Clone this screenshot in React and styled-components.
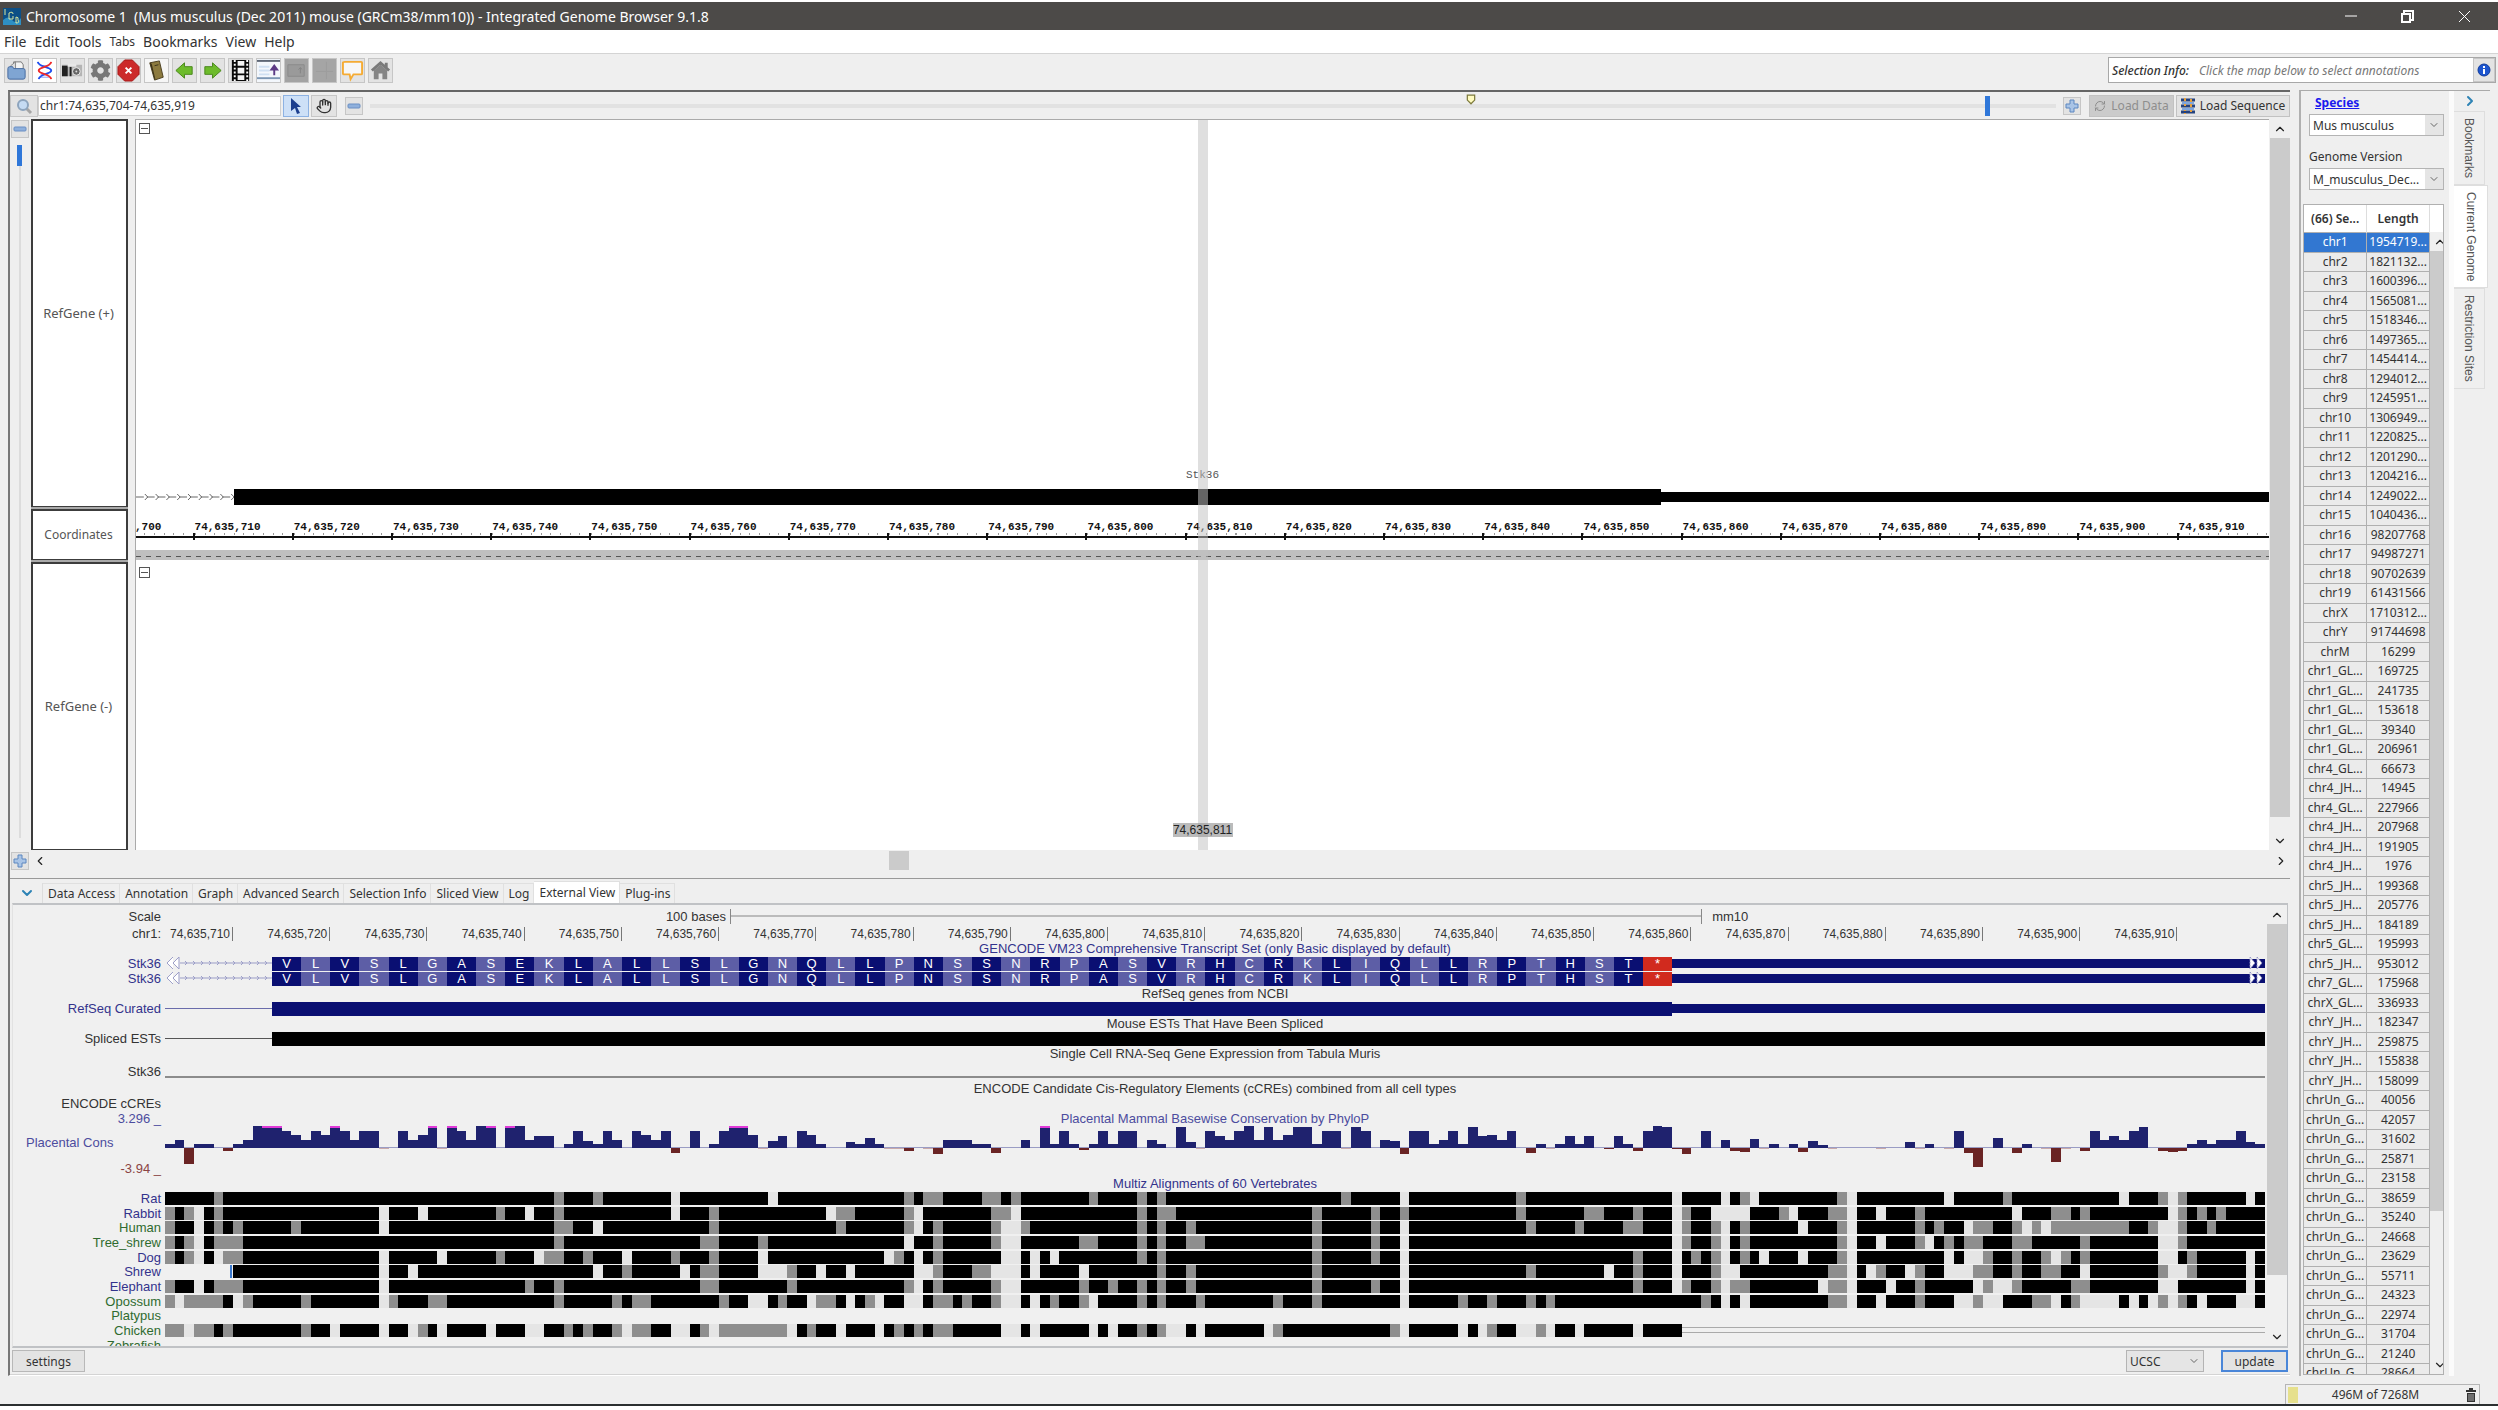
import { useState } from "react";
import styled, { createGlobalStyle, css } from "styled-components";
import { ChevronUp, ChevronDown, ChevronLeft, ChevronRight, Hand, RefreshCw } from "lucide-react";
import { FaCog } from "react-icons/fa";

const BASES = 216;

const menus = ["File", "Edit", "Tools", "Tabs", "Bookmarks", "View", "Help"];
const tabs = ["Data Access", "Annotation", "Graph", "Advanced Search", "Selection Info", "Sliced View", "Log", "External View", "Plug-ins"];
const sideTabs = ["Bookmarks", "Current Genome", "Restriction Sites"];

const sequences = [
  ["chr1", "1954719..."], ["chr2", "1821132..."], ["chr3", "1600396..."], ["chr4", "1565081..."],
  ["chr5", "1518346..."], ["chr6", "1497365..."], ["chr7", "1454414..."], ["chr8", "1294012..."],
  ["chr9", "1245951..."], ["chr10", "1306949..."], ["chr11", "1220825..."], ["chr12", "1201290..."],
  ["chr13", "1204216..."], ["chr14", "1249022..."], ["chr15", "1040436..."], ["chr16", "98207768"],
  ["chr17", "94987271"], ["chr18", "90702639"], ["chr19", "61431566"], ["chrX", "1710312..."],
  ["chrY", "91744698"], ["chrM", "16299"], ["chr1_GL...", "169725"], ["chr1_GL...", "241735"],
  ["chr1_GL...", "153618"], ["chr1_GL...", "39340"], ["chr1_GL...", "206961"], ["chr4_GL...", "66673"],
  ["chr4_JH...", "14945"], ["chr4_GL...", "227966"], ["chr4_JH...", "207968"], ["chr4_JH...", "191905"],
  ["chr4_JH...", "1976"], ["chr5_JH...", "199368"], ["chr5_JH...", "205776"], ["chr5_JH...", "184189"],
  ["chr5_GL...", "195993"], ["chr5_JH...", "953012"], ["chr7_GL...", "175968"], ["chrX_GL...", "336933"],
  ["chrY_JH...", "182347"], ["chrY_JH...", "259875"], ["chrY_JH...", "155838"], ["chrY_JH...", "158099"],
  ["chrUn_G...", "40056"], ["chrUn_G...", "42057"], ["chrUn_G...", "31602"], ["chrUn_G...", "25871"],
  ["chrUn_G...", "23158"], ["chrUn_G...", "38659"], ["chrUn_G...", "35240"], ["chrUn_G...", "24668"],
  ["chrUn_G...", "23629"], ["chrUn_G...", "55711"], ["chrUn_G...", "24323"], ["chrUn_G...", "22974"],
  ["chrUn_G...", "31704"], ["chrUn_G...", "21240"], ["chrUn_G...", "28664"],
];

const peptide = "VLVSLGASEKLALLSLGNQLLPNSSNRPASVRHCRKLIQLLRPTHST*";

// one score per base, 63 = clipped at the top of the track
const conservation = [
  10, 22, -48, 8, 8, 1, -8, 10, 22, 63, 63, 63, 48, 37, 22, 48, 37, 63, 48, 22, 48, 48, -2, 1, 48, 22, 37, 63, -2, 63,
  48, 22, 63, 63, 0, 63, 63, 22, 34, 34, 0, 10, 48, 18, 10, 48, 22, 0, 48, 37, 22, 48, -15, 0, 48, 0, 10, 48, 63, 63,
  37, -2, 18, 34, 0, 48, 37, 10, 0, 0, 16, 10, 26, 10, -2, -2, -10, 1, -2, -18, 20, 22, 22, 10, 10, -15, 0, 0, 22, 0,
  63, 10, 48, 10, -6, 10, 48, 10, 48, 48, 0, 22, 10, 0, 60, 16, -2, 48, 34, 22, 48, 63, 22, 60, 22, 37, 60, 60, 10, 48,
  48, -2, 60, 48, 0, 22, 18, -18, 48, 48, 10, 22, 48, 10, 60, 34, 37, 22, 48, 0, -14, 10, -2, 10, 34, 10, 34, 0, -4, 34,
  10, -10, 48, 63, 60, -4, -18, 0, 48, 0, 20, -8, -12, 24, -2, 10, 0, 10, -12, 18, 6, -2, 0, 0, 0, 0, -2, 0, 0, 16,
  -2, 8, 1, -2, 48, -14, -58, 0, 26, 0, -15, 10, 0, -2, -42, -2, 0, -10, 48, 22, 34, 22, 48, 60, 0, -8, -12, -8, 10, 22,
  10, 22, 22, 48, 14, 10,
];
const clipped = [10, 11, 17, 27, 29, 33, 35, 58, 59, 90];

// gray = mismatch, gap = no aligned base; everything else in a row is a match
const alignments = [
  { name: "Rat", color: "navy",
    gray: "5 40 44 76 78-79 84-85 87 95 100 102 121 139 162 172 189 205 207",
    gap: "52 62 127 155 160 163 173 183 201 206 214" },
  { name: "Rabbit", color: "navy",
    gray: "0 2 5 34 40 56 69-70 76 85-86 100 102-103 118 124 127 139 146-147 151 156 166 171-172 180 194-195 197 207 209 211",
    gap: "3 22 26 37 52 68 77 87 155 159-162 167 173 176 190 206" },
  { name: "Human", color: "green",
    gray: "0 5 7 13 40-41 56 69 76 79 85 88 100 102 105 118 124 140 145 150-151 156 159 162 172 180 182 186-187 190 192 194-201 204 207 210",
    gap: "3 22 44 77 86-87 127 155 160 168 173 185 191 193 205-206" },
  { name: "Tree_shrew", color: "green",
    gray: "0 2 5-7 40 55-56 61 79 85 94-95 100 102 105-106 118 124 156 159 162 172 180 183 185-186 190-191 197 207",
    gap: "3 76 86-87 127 155 160 173 176 181 205-206" },
  { name: "Dog", color: "navy",
    gray: "0 2 6-7 34 39-40 43 52 56 75 79 100 102 118 124 151 157 159 162 172 187 190 193 195 197 208",
    gap: "3 5 22 28 38 47 61 74 77 86-87 89 91 127 155 160 164 168 173 183 185-186 194 205-206 214" },
  { name: "Shrew", color: "navy", start: 7,
    gray: "47 55-56 64 79 83-84 102 105 118 140 151 159 171-172 176 180 186-187 190 193-194 205 208",
    gap: "22 25 44 53 61-63 67 70 77-78 85-87 89 94 127 148 155 160-161 173 175 179 183-185 197 206-207 214" },
  { name: "Elephant", color: "navy",
    gray: "0 5-7 37 40 55-56 64 76 79 85 94 97 100 102 105 118 124 151 156 159 161-162 171-172 180 187 190 196-197",
    gap: "3 22 77 86-87 127 155 160 170 173 177 186 188-189 205-206 214" },
  { name: "Opossum", color: "green",
    gray: "0 2-5 8 14 23 27-28 40 46 48-49 57 63 67-68 72 79-80 82 85 91 94 100 102 106 114 118 133 136 140 142 158 171-172 180 186 192-193 196 205 207",
    gap: "1 7 22 60-61 66 70 73 76-77 86-87 89 95 127 160 162 173 176 184-185 187-188 194 197-200 202 204 206 209 213-214" },
  { name: "Platypus", color: "green", start: BASES, gray: "", gap: "" },
  { name: "Chicken", color: "green", end: 156,
    gray: "0-1 3-4 6 14 26 41 43 46 48-49 55 57-63 66 75 77 79-80 100 102 114 126 136 141",
    gap: "2 17 22 25 28 33 37-38 47 52-53 56 64 69 73 86-87 89 95 97 103-104 106 113 127 133 135 139-140 142 145 151" },
  { name: "Zebrafish", color: "green", start: BASES, gray: "", gap: "" },
];

const spans = (text) =>
  text.split(" ").filter(Boolean).map((part) => {
    const [from, to = from] = part.split("-").map(Number);
    return [from, to - from + 1];
  });

const position = (n) => `74,635,${n}`;
const range = (from, to) => Array.from({ length: (to - from) / 10 + 1 }, (_, i) => from + i * 10);

/* ---------- toolbar drawings ---------- */

const icons = {
  open: (
    <>
      <path d="M9 3h8l2 3v8H9z" fill="#f4f4f4" stroke="#777" />
      <path d="M6 7l5-4v8H6z" fill="#ddd" stroke="#888" />
      <path d="M3 10q0-2 2-2h3l1 2h10q2 0 2 2v7q0 2-2 2H5q-2 0-2-2z" fill="#7fa5d3" stroke="#456a9f" />
    </>
  ),
  dna: (
    <>
      <rect width="24" height="24" fill="#fff" />
      <path d="M7 7h10M8 16h8M7 19h10" stroke="#8a9cf0" strokeWidth="1" />
      <path d="M5 3c1 6 14 5 14 9S7 15 6 21" fill="none" stroke="#1f4ff0" strokeWidth="2" />
      <path d="M19 3c-1 6-13 5-13 9s12 3 13 9" fill="none" stroke="#f02a2a" strokeWidth="2" />
    </>
  ),
  camera: (
    <>
      <path d="M1 6h21v12H1z" fill="#b4b4b4" />
      <path d="M1 7h6v11H1zM9 8h2v10H9z" fill="#222" />
      <path d="M7 5h9v3H7z" fill="#e8e8e8" />
      <circle cx="16" cy="13" r="4" fill="#666" stroke="#eee" />
      <circle cx="16" cy="13" r="1" fill="#ddd" />
    </>
  ),
  stop: (
    <>
      <path d="M8 1h8l7 7v8l-7 7H8l-7-7V8z" fill="#cc2a2a" stroke="#a31717" />
      <path d="M9 9l6 6M15 9l-6 6" stroke="#fff" strokeWidth="2" />
    </>
  ),
  book: (
    <>
      <rect width="24" height="24" fill="#f6f6f6" />
      <path d="M5 4l10-2 4 17-9 3z" fill="#8c7a3f" stroke="#4c4020" />
      <path d="M5 4l2 1 4 17-1-1z" fill="#3b3118" />
      <path d="M10 7l4-1" stroke="#3b3118" />
    </>
  ),
  back: <path d="M3 12l9-8v4h8v8h-8v4z" fill="#6dbb2b" stroke="#48861a" />,
  forward: <path d="M21 12l-9-8v4H4v8h8v4z" fill="#6dbb2b" stroke="#48861a" />,
  film: (
    <>
      <rect x="3" y="1" width="18" height="22" fill="#0a0a0a" />
      <path d="M9 2h7v5H9zM9 9h7v6H9zM9 17h7v5H9z" fill="#f4f4f4" />
      <path d="M6 1v22M19 1v22" stroke="#fff" strokeWidth="2" strokeDasharray="2 2" />
    </>
  ),
  panelUp: (
    <>
      <rect width="24" height="24" fill="#f3f7fc" />
      <path d="M0 2h24" stroke="#5d6675" strokeWidth="2" />
      <path d="M0 20h24" stroke="#7d97b5" strokeWidth="2" />
      <path d="M2 8h11M2 12h11M2 16h11" stroke="#cfe0f2" strokeWidth="2" />
      <path d="M18 17V8M15 11l3-4 3 4z" fill="#5b3a86" stroke="#5b3a86" strokeWidth="2" />
    </>
  ),
  panelOff: (
    <>
      <rect width="24" height="24" fill="#a3a3a3" />
      <path d="M3 6h17v12H3z" fill="#9a9a9a" stroke="#8a8a8a" />
      <path d="M16 15V9M14 11l2-2 2 2" fill="none" stroke="#848484" />
    </>
  ),
  blankOff: (
    <>
      <rect width="24" height="24" fill="#a5a5a5" />
      <path d="M14 3v18M3 13h18" stroke="#9d9d9d" />
    </>
  ),
  bubble: <path d="M4 3h17q1 0 1 1v11q0 1-1 1h-8l-3 5-1-5H4q-2 0-2-1V4q0-1 2-1z" fill="#f7f7f7" stroke="#f5ab33" strokeWidth="2" />,
  home: (
    <>
      <path d="M5 12l7-6 7 6v9h-5v-6h-4v6H5z" fill="#858585" />
      <path d="M3 12l9-8 9 8M18 4v5" fill="none" stroke="#7a7a7a" strokeWidth="3" />
    </>
  ),
};

const toolbarItems = ["open", "dna", "camera", "gear", "stop", "book", "back", "forward", "film", "panelUp", "panelOff", "blankOff", "bubble", "home"];

function ToolIcon({ name }) {
  if (name === "gear") return <FaCog size={21} color="#777" />;
  return (
    <svg width="23" height="23" viewBox="0 0 24 24">
      {icons[name]}
    </svg>
  );
}

const Plus = () => (
  <svg width="14" height="14" viewBox="0 0 14 14">
    <path d="M5 1h4v4h4v4H9v4H5V9H1V5h4z" fill="#a9c4e6" stroke="#5d87c0" />
  </svg>
);
const Minus = () => (
  <svg width="14" height="14" viewBox="0 0 14 14">
    <rect x="1" y="5" width="12" height="4" rx="1" fill="#8fb0dc" stroke="#6a8fc4" />
  </svg>
);

function Scrollbar({ start, size, horizontal }) {
  return (
    <ScrollTrack $horizontal={horizontal}>
      <ScrollButton aria-label="Scroll back">{horizontal ? <ChevronLeft size={14} /> : <ChevronUp size={14} />}</ScrollButton>
      <ScrollLane>
        <ScrollThumb
          $horizontal={horizontal}
          style={horizontal ? { left: `${start}%`, width: `${size}%` } : { top: `${start}%`, height: `${size}%` }}
        />
      </ScrollLane>
      <ScrollButton aria-label="Scroll on">{horizontal ? <ChevronRight size={14} /> : <ChevronDown size={14} />}</ScrollButton>
    </ScrollTrack>
  );
}

function MapRuler() {
  return (
    <Coordinates>
      <RulerLabels>
        {range(700, 910).map((n) => (
          <span key={n}>{position(n)}</span>
        ))}
      </RulerLabels>
      <RulerLine>
        {range(700, 910).map((n) => (
          <i key={n} />
        ))}
      </RulerLine>
      <DashedBand />
    </Coordinates>
  );
}

function GenomeMap() {
  return (
    <MapCanvas>
      <TrackPlus>
        <Collapse aria-label="Collapse RefGene (+)" />
        <Spacer />
        <GeneLabel>Stk36</GeneLabel>
        <GeneRow>
          <Intron>
            {Array.from({ length: 9 }, (_, i) => (
              <path key={i} d={`M${9 + i * 11} 5l3 3-3 3`} />
            ))}
            <path d="M0 8h100" strokeDasharray="8 3" />
          </Intron>
          <Exon />
          <Utr />
        </GeneRow>
      </TrackPlus>
      <MapRuler />
      <TrackMinus>
        <Collapse aria-label="Collapse RefGene (-)" />
      </TrackMinus>
      <Hairline />
      <HairlineLabel>74,635,811</HairlineLabel>
    </MapCanvas>
  );
}

function Transcript() {
  return (
    <Row $h={15}>
      <Label $color="navy">Stk36</Label>
      <Data>
        <IntronUcsc viewBox="0 0 107 15" preserveAspectRatio="none">
          <path d="M8 1L2 7l6 6M14 1L8 7l6 6V1z" fill="#fff" />
          <path d="M15 7h92" />
          {Array.from({ length: 11 }, (_, i) => (
            <path key={i} d={`M${20 + i * 8} 5l2 2-2 2`} />
          ))}
        </IntronUcsc>
        <Peptide>
          {[...peptide].map((letter, i) => (
            <Residue key={i} $stop={letter === "*"} $light={i % 2 === 1}>
              {letter}
            </Residue>
          ))}
        </Peptide>
        <Tail />
        <TailEnd viewBox="0 0 16 15">
          <path d="M0 3h16v9H0z" fill="#0a0f72" />
          <path d="M1 1l5 6-5 6zM8 1l5 6-5 6z" fill="#fff" stroke="#8f90c0" strokeDasharray="2 1" />
        </TailEnd>
      </Data>
    </Row>
  );
}

function Conservation() {
  return (
    <Wiggle viewBox={`0 0 ${BASES} 126`} preserveAspectRatio="none">
      <rect y="62" width={BASES} height="3" fill="#9a9cc4" />
      {conservation.map((v, i) => (
        <g key={i}>
          {v > 2 && <rect x={i} y={63 - v} width="1" height={v + 3} fill="#1f226e" />}
          {v < -1 && <rect x={i} y="66" width="1" height={-v} fill={v < -2 ? "#6a2424" : "#c9a9a9"} />}
          {clipped.includes(i) && <rect x={i} y="0" width="1" height="6" fill="#e03ad8" />}
        </g>
      ))}
    </Wiggle>
  );
}

function AlignmentRow({ name, color, start = 0, end = BASES, gray, gap }) {
  return (
    <Species>
      <Label $color={color}>{name}</Label>
      <Data>
        <AlignmentBars viewBox={`0 0 ${BASES} 13`} preserveAspectRatio="none">
          {start < BASES && <rect x={start} width={end - start} height="13" fill="#000" />}
          {spans(gray).map(([x, w]) => (
            <rect key={x} x={x} width={w} height="13" fill="#8e8e8e" />
          ))}
          {spans(gap).map(([x, w]) => (
            <rect key={x} x={x} width={w} height="13" fill="#e5e5e5" />
          ))}
          {start === 7 && <rect x="6.7" width="0.2" height="13" fill="#3b7ad0" />}
          {end < BASES && <path d={`M${end} 3h${BASES - end}v1H${end}zM${end} 8h${BASES - end}v1H${end}z`} fill="#aaa" />}
        </AlignmentBars>
      </Data>
    </Species>
  );
}

function ExternalView() {
  return (
    <Viewer>
      <Tracks>
        <Row $h={20}>
          <Label>Scale</Label>
          <Data>
            <ScaleStart>100 bases</ScaleStart>
            <ScaleBar />
            <ScaleEnd>mm10</ScaleEnd>
          </Data>
        </Row>
        <Row $h={15}>
          <Label>chr1:</Label>
          <Data>
            {range(710, 910).map((n) => (
              <Tick key={n} $bases={n === 710 ? 7 : 10}>
                {position(n)}
              </Tick>
            ))}
          </Data>
        </Row>
        <Title $color="navy">GENCODE VM23 Comprehensive Transcript Set (only Basic displayed by default)</Title>
        <Transcript />
        <Transcript />
        <Title>RefSeq genes from NCBI</Title>
        <Row $h={15}>
          <Label $color="navy">RefSeq Curated</Label>
          <Data>
            <Lead $color="#6a6cab" />
            <Block $bases={144} $color="#0a0f72" />
            <Block $bases={61} $color="#0a0f72" $thin />
          </Data>
        </Row>
        <Title>Mouse ESTs That Have Been Spliced</Title>
        <Row $h={15}>
          <Label>Spliced ESTs</Label>
          <Data>
            <Lead $color="#555" />
            <Block $bases={205} $color="#000" />
          </Data>
        </Row>
        <Title>Single Cell RNA-Seq Gene Expression from Tabula Muris</Title>
        <Row $h={20}>
          <Label>Stk36</Label>
          <Data>
            <Baseline />
          </Data>
        </Row>
        <Title>ENCODE Candidate Cis-Regulatory Elements (cCREs) combined from all cell types</Title>
        <Row $h={15}>
          <Label>ENCODE cCREs</Label>
        </Row>
        <Row $h={15}>
          <Label $color="slate">3.296 _</Label>
          <Caption $color="slate">Placental Mammal Basewise Conservation by PhyloP</Caption>
        </Row>
        <Row $h={50}>
          <ConsLabels>
            <ConsName>Placental Cons</ConsName>
            <Label $color="brown">-3.94 _</Label>
          </ConsLabels>
          <Data $top>
            <Conservation />
          </Data>
        </Row>
        <Title $color="navy">Multiz Alignments of 60 Vertebrates</Title>
        {alignments.map((row) => (
          <AlignmentRow key={row.name} {...row} />
        ))}
      </Tracks>
      <Scrollbar start={0} size={87} />
    </Viewer>
  );
}

function App() {
  const [tab, setTab] = useState("External View");
  const [sideTab, setSideTab] = useState("Current Genome");
  const [selected, setSelected] = useState(0);

  return (
    <Window>
      <GlobalStyle />
      <TitleBar>
        <svg width="18" height="17" viewBox="0 0 18 17">
          <rect width="18" height="17" fill="#0d4f86" />
          <path d="M0 12q5-5 9 0t9-2v7H0z" fill="#2e8fc4" />
          <path d="M2 1v6M6 5q4-2 4 1M6 5v6h4V8M13 9v6q4 0 2-3q1-3-2-3" fill="none" stroke="#d8e6a0" />
        </svg>
        <h1>Chromosome 1&nbsp; (Mus musculus (Dec 2011) mouse (GRCm38/mm10)) - Integrated Genome Browser 9.1.8</h1>
        <WindowButton aria-label="Minimize">
          <svg width="12" height="12"><path d="M0 6h12" stroke="#fff" /></svg>
        </WindowButton>
        <WindowButton aria-label="Restore">
          <svg width="13" height="13"><path d="M1 4h8v8H1zM3 4V1h9v9H9" fill="none" stroke="#fff" strokeWidth="2" /></svg>
        </WindowButton>
        <WindowButton aria-label="Close">
          <svg width="13" height="13"><path d="M1 1l11 11M12 1L1 12" stroke="#fff" /></svg>
        </WindowButton>
      </TitleBar>

      <MenuBar>
        {menus.map((name) => (
          <MenuItem key={name} $small={name === "Tabs"}>{name}</MenuItem>
        ))}
      </MenuBar>

      <Toolbar>
        {toolbarItems.map((name) => (
          <ToolButton key={name} aria-label={name}>
            <ToolIcon name={name} />
          </ToolButton>
        ))}
        <Spacer />
        <SelectionInfo>
          <b>Selection Info:</b>
          <em>Click the map below to select annotations</em>
          <InfoButton aria-label="Selection details">
            <svg width="14" height="14">
              <circle cx="7" cy="7" r="6" fill="#1c55cf" stroke="#0e3a9c" />
              <path d="M7 3v2M7 6v5" stroke="#fff" strokeWidth="2" />
            </svg>
          </InfoButton>
        </SelectionInfo>
      </Toolbar>

      <Main>
        <Workspace>
          <SearchRow>
            <SearchButton aria-label="Search">
              <svg width="18" height="18">
                <path d="M11 11l5 5" stroke="#a5a5a5" strokeWidth="3" />
                <circle cx="8" cy="8" r="5" fill="#c5dbf3" stroke="#8da4bd" strokeWidth="2" />
              </svg>
            </SearchButton>
            <SearchInput aria-label="Coordinates" defaultValue="chr1:74,635,704-74,635,919" />
            <ModeGroup>
              <ModeButton $on aria-label="Select mode">
                <svg width="14" height="18"><path d="M2 1l10 9H8l3 6-3 1-2-6-4 3z" fill="#1c3f8f" /></svg>
              </ModeButton>
              <ModeButton aria-label="Scroll mode">
                <Hand size={16} color="#333" />
              </ModeButton>
            </ModeGroup>
            <ZoomButton aria-label="Zoom out horizontally"><Minus /></ZoomButton>
            <ZoomSlider>
              <Range aria-label="Horizontal zoom" defaultValue={961} />
              <Marker viewBox="0 0 8 9"><path d="M1 1h6v4L4 8 1 5z" fill="#fffbc0" stroke="#7d7a3c" /></Marker>
            </ZoomSlider>
            <ZoomButton aria-label="Zoom in horizontally"><Plus /></ZoomButton>
            <LoadButton disabled>
              <RefreshCw size={12} color="#8e8e8e" /> Load Data
            </LoadButton>
            <LoadButton>
              <svg width="14" height="16">
                <path d="M0 2h14M0 8h14M0 14h14" stroke="#24427e" strokeWidth="3" />
                <path d="M4 0v16M10 1v14" stroke="#e8a13c" strokeWidth="2" strokeDasharray="3 2" />
                <path d="M1 5h12M1 11h12" stroke="#7fa6dd" strokeWidth="2" />
              </svg>
              Load Sequence
            </LoadButton>
          </SearchRow>

          <MapArea>
            <ZoomColumn>
              <ZoomButton aria-label="Zoom out vertically"><Minus /></ZoomButton>
              <Range $vertical aria-label="Vertical zoom" defaultValue={0} />
            </ZoomColumn>
            <TrackLabels>
              <TrackLabel $grow={389}>RefGene (+)</TrackLabel>
              <TrackLabel>Coordinates</TrackLabel>
              <TrackLabel $grow={288}>RefGene (-)</TrackLabel>
            </TrackLabels>
            <GenomeMap />
            <Scrollbar start={0} size={98} />
          </MapArea>
          <MapFooter>
            <ZoomButton aria-label="Zoom in vertically"><Plus /></ZoomButton>
            <Scrollbar horizontal start={37.8} size={0.9} />
          </MapFooter>

          <BottomPanel>
            <TabBar>
              <TabArrow aria-label="Hide panel">
                <ChevronDown size={16} color="#2d83b5" strokeWidth={3} />
              </TabArrow>
              {tabs.map((name) => (
                <Tab key={name} $active={name === tab} onClick={() => setTab(name)}>{name}</Tab>
              ))}
            </TabBar>
            <ExternalView />
            <ViewFooter>
              <FlatButton>settings</FlatButton>
              <Spacer />
              <SelectBox $width={78}>
                <select aria-label="Browser"><option>UCSC</option></select>
                <ChevronDown size={12} color="#666" />
              </SelectBox>
              <FlatButton $primary>update</FlatButton>
            </ViewFooter>
          </BottomPanel>
        </Workspace>

        <SidePanel>
          <GenomePanel>
            <Field>
              <a href="#species">Species</a>
              <SelectBox $light>
                <select aria-label="Species"><option>Mus musculus</option></select>
                <ChevronDown size={12} color="#666" />
              </SelectBox>
            </Field>
            <Field>
              <label htmlFor="version">Genome Version</label>
              <SelectBox $light>
                <select id="version"><option>M_musculus_Dec...</option></select>
                <ChevronDown size={12} color="#666" />
              </SelectBox>
            </Field>
            <SequenceList>
              <SequenceTable>
                <thead>
                  <tr><th>(66) Se...</th><th>Length</th></tr>
                </thead>
                <tbody>
                  {sequences.map(([name, length], i) => (
                    <SequenceRow key={i} $selected={i === selected} onClick={() => setSelected(i)}>
                      <td>{name}</td>
                      <td>{length}</td>
                    </SequenceRow>
                  ))}
                </tbody>
              </SequenceTable>
              <SequenceScroll>
                <Scrollbar start={0} size={87} />
              </SequenceScroll>
            </SequenceList>
          </GenomePanel>
          <SideTabs>
            <SideArrow aria-label="Hide side panel">
              <ChevronRight size={16} color="#2d83b5" strokeWidth={3} />
            </SideArrow>
            {sideTabs.map((name) => (
              <SideTab key={name} $active={name === sideTab} onClick={() => setSideTab(name)}>{name}</SideTab>
            ))}
          </SideTabs>
        </SidePanel>
      </Main>

      <StatusBar>
        <Memory>
          <MemoryUsed />
          <span>496M of 7268M</span>
          <svg width="12" height="14"><path d="M1 2h10v2H1zM4 0h4v2H4zM2 5h8v9H2z" fill="#333" /><path d="M4 6v7M6 6v7M8 6v7" stroke="#aaa" /></svg>
        </Memory>
      </StatusBar>
    </Window>
  );
}

export default App;

const GlobalStyle = createGlobalStyle`
  * {
    box-sizing: border-box;
  }
  body {
    margin: 0;
    background: #fff;
    color: #333;
    font-family: "Noto Sans", "Open Sans", sans-serif;
    font-size: 12px;
  }
  button, input, select {
    font: inherit;
    color: inherit;
    margin: 0;
    padding: 0;
    border: none;
    background: none;
    border-radius: 0;
    outline: none;
  }
  svg {
    display: block;
    flex: none;
  }
`;

const trackColors = {
  navy: "#33338c",
  slate: "#4c4c9e",
  green: "#2f6b2f",
  brown: "#8a4444",
};

const center = css`
  display: flex;
  align-items: center;
  justify-content: center;
`;

const raised = css`
  background: #e3e3e3;
  border: 1px solid #c6c6c6;
`;

const Window = styled.div`
  display: flex;
  flex-direction: column;
  height: 100vh;
  min-height: 900px;
  border-top: 2px solid #fff;
  border-bottom: 4px solid #fff;
  background: #efefef;
`;

const Spacer = styled.div`
  flex: 1;
`;

const TitleBar = styled.header`
  display: flex;
  align-items: center;
  flex: none;
  height: 28px;
  padding: 0 5px 0 3px;
  background: #4c4a48;
  color: #fff;

  h1 {
    flex: 1;
    margin: 0 0 0 5px;
    font-size: 14px;
    font-weight: 400;
  }
`;

const WindowButton = styled.button`
  ${center}
  width: 57px;
  height: 28px;
`;

const MenuBar = styled.nav`
  display: flex;
  align-items: center;
  flex: none;
  gap: 8px;
  height: 24px;
  padding: 0 4px;
  background: #fff;
  border-bottom: 1px solid #d4d4d4;
`;

const MenuItem = styled.button`
  font-size: ${({ $small }) => ($small ? "12px" : "14px")};
`;

const Toolbar = styled.div`
  display: flex;
  align-items: center;
  flex: none;
  gap: 3px;
  height: 36px;
  padding: 0 2px 4px 4px;
`;

const ToolButton = styled.button`
  ${center}
  ${raised}
  width: 25px;
  height: 25px;
`;

const SelectionInfo = styled.div`
  display: flex;
  align-items: center;
  gap: 10px;
  height: 26px;
  padding-left: 3px;
  width: 388px;
  background: #fff;
  border: 1px solid #a8a8a8;
  font-style: italic;

  b {
    font-weight: 500;
  }
  em {
    flex: 1;
    color: #777;
    font-size: 12px;
    white-space: nowrap;
  }
`;

const InfoButton = styled.button`
  ${center}
  ${raised}
  width: 22px;
  height: 24px;
`;

const Main = styled.main`
  display: flex;
  flex: 1;
  gap: 9px;
  min-height: 0;
  padding: 0 8px;
`;

const Workspace = styled.section`
  display: flex;
  flex-direction: column;
  flex: 1;
  min-width: 0;
  border-top: 2px solid #666;
  border-left: 2px solid #777;
  border-bottom: 1px solid #fff;
`;

const SearchRow = styled.div`
  display: flex;
  align-items: center;
  flex: none;
  height: 27px;
`;

const SearchButton = styled.button`
  ${center}
  ${raised}
  width: 28px;
  height: 22px;
`;

const SearchInput = styled.input`
  width: 243px;
  height: 20px;
  padding-left: 1px;
  background: #fff;
  border: 1px solid #d0d0d0;
`;

const ModeGroup = styled.div`
  display: flex;
  gap: 2px;
  margin: 0 8px 0 2px;
`;

const ModeButton = styled.button`
  ${center}
  width: 26px;
  height: 22px;
  background: ${({ $on }) => ($on ? "#cde0f7" : "#e3e3e3")};
  border: 1px solid ${({ $on }) => ($on ? "#8db2e3" : "#c6c6c6")};
`;

const ZoomButton = styled.button`
  ${center}
  ${raised}
  flex: none;
  width: 18px;
  height: 18px;
`;

const ZoomSlider = styled.div`
  position: relative;
  display: flex;
  align-items: center;
  flex: 1;
  height: 22px;
  margin: 0 7px;
`;

const Marker = styled.svg`
  position: absolute;
  left: 65%;
  top: -1px;
  width: 10px;
  height: 11px;
`;

const Range = styled.input.attrs({ type: "range", min: 0, max: 1000 })`
  appearance: none;
  width: 100%;
  height: 20px;
  background: linear-gradient(#e2e2e2, #e2e2e2) center / 100% 4px no-repeat;

  &::-webkit-slider-thumb {
    appearance: none;
    width: 5px;
    height: 20px;
    background: #2f77d9;
  }

  ${({ $vertical }) =>
    $vertical &&
    css`
      writing-mode: vertical-lr;
      flex: 1;
      width: 18px;
      min-height: 0;
      background: linear-gradient(#dcdcdc, #dcdcdc) center / 2px 100% no-repeat;

      &::-webkit-slider-thumb {
        width: 5px;
        height: 21px;
      }
    `}
`;

const LoadButton = styled.button`
  ${center}
  gap: 5px;
  width: ${({ disabled }) => (disabled ? "85px" : "114px")};
  height: 22px;
  margin-left: ${({ disabled }) => (disabled ? "8px" : "2px")};
  background: ${({ disabled }) => (disabled ? "#cbcbcb" : "#e3e3e3")};
  border: 1px solid #c2c2c2;
  color: ${({ disabled }) => (disabled ? "#8e8e8e" : "#333")};
  white-space: nowrap;
`;

const MapArea = styled.div`
  display: flex;
  flex: 1;
  min-height: 0;
`;

const ZoomColumn = styled.div`
  display: flex;
  flex-direction: column;
  align-items: center;
  gap: 7px;
  width: 21px;
  padding: 1px 2px 12px 0;
`;

const TrackLabels = styled.div`
  display: flex;
  flex-direction: column;
  gap: 2px;
  width: 97px;
  margin-right: 7px;
  background: #aaa;
`;

const TrackLabel = styled.div`
  ${center}
  flex: ${({ $grow }) => ($grow ? `${$grow} 1 0` : "0 0 51px")};
  padding-right: 2px;
  background: #fff;
  border: 2px solid #3c3c3c;
  border-bottom-width: 1px;
  color: #555;
  font-size: ${({ $grow }) => ($grow ? "13px" : "12px")};
`;

const MapCanvas = styled.div`
  position: relative;
  display: flex;
  flex-direction: column;
  flex: 1;
  min-width: 0;
  margin-right: 1px;
  background: #fff;
  border-top: 1px solid #aaa;
  border-left: 1px solid #aaa;
`;

const TrackPlus = styled.div`
  display: flex;
  flex-direction: column;
  flex: 389 1 0;
  padding: 3px 0 5px;
`;

const TrackMinus = styled.div`
  flex: 288 1 0;
  padding-top: 5px;
`;

const Collapse = styled.button`
  display: block;
  width: 11px;
  height: 11px;
  margin-left: 3px;
  border: 1px solid #555;
  background: linear-gradient(#555, #555) center / 7px 1px no-repeat;
`;

const GeneLabel = styled.div`
  color: #555;
  font: 11px/12px "Liberation Mono", monospace;
  text-align: center;
  margin-bottom: 8px;
`;

const GeneRow = styled.div`
  display: flex;
  align-items: center;
  height: 16px;
`;

const Intron = styled.svg.attrs({ viewBox: "0 0 100 16", preserveAspectRatio: "none" })`
  width: 4.6%;
  height: 16px;
  fill: none;
  stroke: #666;
`;

const Exon = styled.div`
  width: 66.9%;
  height: 16px;
  background: #000;
`;

const Utr = styled.div`
  flex: 1;
  height: 10px;
  background: #000;
`;

const Coordinates = styled.div`
  flex: none;
  height: 52px;
  padding-top: 12px;
  overflow: hidden;
`;

const RulerLabels = styled.div`
  display: flex;
  margin-left: -2%;
  height: 11px;
  color: #111;
  font: bold 11px/11px "Liberation Mono", monospace;

  span {
    flex: 0 0 4.56%;
    padding-left: 2px;
  }
`;

const RulerLine = styled.div`
  display: flex;
  margin-left: -2%;
  height: 7px;
  background: linear-gradient(#111, #111) 0 3px / 100% 2px no-repeat;

  i {
    flex: 0 0 4.56%;
    border-left: 2px solid #111;
    background: repeating-linear-gradient(90deg, #999 0 1px, transparent 1px 10%) 0 0 / 100% 2px no-repeat;
  }
`;

const DashedBand = styled.div`
  height: 10px;
  margin-top: 10px;
  background: repeating-linear-gradient(90deg, #555 0 5px, transparent 5px 10px) 0 6px / 100% 1px no-repeat #bfbfbf;
`;

const Hairline = styled.div`
  position: absolute;
  top: 0;
  bottom: 0;
  left: calc(50% - 5px);
  width: 10px;
  background: rgba(193, 193, 193, 0.52);
`;

const HairlineLabel = styled.div`
  position: absolute;
  bottom: 13px;
  left: calc(50% - 30px);
  width: 60px;
  background: rgba(150, 150, 150, 0.65);
  color: #222;
  font: 12px/14px "Liberation Sans", sans-serif;
  text-align: center;
`;

const MapFooter = styled.div`
  display: flex;
  align-items: center;
  flex: none;
  gap: 2px;
  height: 21px;
  padding-left: 1px;
`;

const ScrollTrack = styled.div`
  display: flex;
  flex-direction: ${({ $horizontal }) => ($horizontal ? "row" : "column")};
  flex: ${({ $horizontal }) => ($horizontal ? "1" : "none")};
  width: ${({ $horizontal }) => ($horizontal ? "auto" : "20px")};
  height: ${({ $horizontal }) => ($horizontal ? "19px" : "auto")};
`;

const ScrollButton = styled.button`
  ${center}
  flex: none;
  min-width: 18px;
  height: 19px;
  color: #222;
`;

const ScrollLane = styled.div`
  position: relative;
  flex: 1;
`;

const ScrollThumb = styled.div`
  position: absolute;
  ${({ $horizontal }) => ($horizontal ? "top: 0; bottom: 0;" : "left: 0; right: 0;")}
  background: #cbcbcb;
`;

const BottomPanel = styled.div`
  flex: none;
  margin-top: 7px;
  padding: 2px 2px 0 2px;
  border-top: 1px solid #999;
  border-bottom: 1px solid #d4d4d4;
`;

const TabBar = styled.div`
  display: flex;
  align-items: flex-end;
  height: 22px;
`;

const TabArrow = styled.button`
  ${center}
  width: 31px;
  height: 20px;
  border-right: 1px solid #ddd;
`;

const Tab = styled.button`
  height: ${({ $active }) => ($active ? "22px" : "20px")};
  padding: 0 4px 0 5px;
  background: ${({ $active }) => ($active ? "#fff" : "#efefef")};
  border: 1px solid #e0e0e0;
  border-width: 1px 1px 0 0;
  line-height: 16px;
  white-space: nowrap;
`;

const Viewer = styled.div`
  display: flex;
  height: 445px;
  overflow: hidden;
  background: #f0f0f0;
  border: 1px solid #c0c2c5;
  border-width: 2px 1px;
  border-left-color: #e2e2e2;
`;

const Tracks = styled.div`
  flex: 1;
  min-width: 0;
  font: 13px/15px "Liberation Sans", Arial, sans-serif;
  padding: 1px 2px 0 0;
`;

const Row = styled.div`
  display: flex;
  height: ${({ $h }) => $h}px;
`;

const Label = styled.div`
  flex: none;
  align-self: center;
  width: 152px;
  padding-right: 4px;
  color: ${({ $color }) => trackColors[$color] || "#333"};
  text-align: right;
`;

const Data = styled.div`
  display: flex;
  align-items: ${({ $top }) => ($top ? "flex-start" : "center")};
  flex: 1;
  min-width: 0;
`;

const Caption = styled.div`
  flex: 1;
  color: ${({ $color }) => trackColors[$color] || "#333"};
  text-align: center;
`;

const Title = styled(Caption)`
  height: 15px;
  margin-left: 152px;
`;

const ScaleStart = styled.div`
  width: 26.9%;
  padding-right: 4px;
  text-align: right;
`;

const ScaleBar = styled.div`
  width: 46.3%;
  height: 15px;
  border: 1px solid #888;
  border-width: 0 1px;
  background: linear-gradient(#bbb, #bbb) center / 100% 2px no-repeat;
`;

const ScaleEnd = styled.div`
  padding-left: 10px;
`;

const Tick = styled.div`
  flex: none;
  width: ${({ $bases }) => ($bases / BASES) * 100}%;
  height: 14px;
  padding-right: 2px;
  border-right: 1px solid #777;
  font-size: 12px;
  text-align: right;
`;

const IntronUcsc = styled.svg`
  width: ${(11 / BASES) * 100}%;
  height: 15px;
  fill: none;
  stroke: #9c9ec8;
`;

const Peptide = styled.div`
  display: flex;
  width: ${(144 / BASES) * 100}%;
  height: 14px;
`;

const Residue = styled.span`
  flex: 1;
  background: ${({ $stop, $light }) => ($stop ? "#d12a1e" : $light ? "#5d5ea6" : "#0a0f72")};
  color: #fff;
  line-height: 14px;
  text-align: center;
`;

const Tail = styled.div`
  flex: 1;
  height: 9px;
  background: #0a0f72;
`;

const TailEnd = styled.svg`
  width: 16px;
  height: 15px;
`;

const Lead = styled.div`
  width: ${(11 / BASES) * 100}%;
  height: 1px;
  background: ${({ $color }) => $color};
`;

const Block = styled.div`
  width: ${({ $bases }) => ($bases / BASES) * 100}%;
  height: ${({ $thin }) => ($thin ? "9px" : "14px")};
  background: ${({ $color }) => $color};
`;

const Baseline = styled.div`
  align-self: flex-end;
  flex: 1;
  height: 2px;
  margin-bottom: 3px;
  background: #8c8c8c;
`;

const ConsLabels = styled.div`
  display: flex;
  flex-direction: column;
  justify-content: space-between;
  width: 152px;
  padding-top: 9px;
`;

const ConsName = styled.div`
  padding-left: 13px;
  color: ${trackColors.slate};
`;

const Wiggle = styled.svg`
  width: 100%;
  height: 42px;
  shape-rendering: crispEdges;
`;

const AlignmentBars = styled.svg`
  width: 100%;
  height: 13px;
  shape-rendering: crispEdges;
`;

const Species = styled.div`
  display: flex;
  height: 15px;

  &:nth-child(3n) {
    height: 14px;
  }
`;

const ViewFooter = styled.div`
  display: flex;
  align-items: center;
  height: 26px;
`;

const FlatButton = styled.button`
  ${center}
  width: ${({ $primary }) => ($primary ? "67px" : "73px")};
  height: 22px;
  margin-left: ${({ $primary }) => ($primary ? "17px" : "0")};
  background: #e3e3e3;
  border: ${({ $primary }) => ($primary ? "2px solid #4a86d8" : "1px solid #b8b8b8")};
`;

const SelectBox = styled.div`
  display: flex;
  align-items: center;
  flex: none;
  width: ${({ $width }) => ($width ? `${$width}px` : "100%")};
  height: 22px;
  padding-right: 3px;
  background: #e5e5e5;
  border: 1px solid #b4b4b4;

  select {
    appearance: none;
    flex: 1;
    min-width: 0;
    height: 100%;
    margin-right: 3px;
    padding-left: 3px;
    background: ${({ $light }) => ($light ? "#fff" : "transparent")};
  }
`;

const SidePanel = styled.aside`
  display: flex;
  width: 191px;
  border-top: 1px solid #aaa;
  border-left: 2px solid #b0b0b0;
`;

const GenomePanel = styled.div`
  display: flex;
  flex-direction: column;
  flex: 1;
  min-width: 0;
  padding: 3px 5px 1px 2px;
  border-right: 5px solid #fbfbfb;
`;

const Field = styled.div`
  display: flex;
  flex-direction: column;
  gap: 3px;
  height: 45px;
  margin-bottom: 10px;
  padding-left: 6px;

  a {
    margin-left: 6px;
    color: #1a1aee;
    font-weight: 700;
    line-height: 17px;
  }
  label {
    line-height: 16px;
  }
`;

const SequenceList = styled.div`
  display: flex;
  flex: 1;
  min-height: 0;
  overflow: hidden;
  background: #fff;
  border: 1px solid #b0b0b0;
`;

const SequenceTable = styled.table`
  flex: none;
  align-self: flex-start;
  width: 126px;
  border-collapse: collapse;
  table-layout: fixed;
  text-align: center;

  th {
    height: 27px;
    padding: 0;
    border-right: 1px solid #ddd;
    font-weight: 600;
    white-space: nowrap;
  }
`;

const SequenceRow = styled.tr`
  height: 19px;
  background: ${({ $selected }) => ($selected ? "#3277d1" : "#ebebeb")};
  color: ${({ $selected }) => ($selected ? "#fff" : "#333")};

  &:nth-child(odd) {
    height: 20px;
  }
  td {
    padding: 0;
    border: 1px solid #b0b0b0;
    border-left: none;
    line-height: 16px;
    white-space: nowrap;
  }
`;

const SequenceScroll = styled.div`
  display: flex;
  flex: 1;
  padding-top: 27px;
  background: linear-gradient(#fff, #fff) 0 0 / 100% 27px no-repeat #efefef;
`;

const SideTabs = styled.div`
  width: 36px;
`;

const SideArrow = styled.button`
  ${center}
  width: 31px;
  height: 20px;
`;

const SideTab = styled.button`
  display: block;
  width: ${({ $active }) => ($active ? "34px" : "31px")};
  padding: 6px 0;
  background: ${({ $active }) => ($active ? "#fff" : "#efefef")};
  border: 1px solid #dedede;
  border-left: none;
  color: #555;
  font: 12px/16px "Liberation Sans", Arial, sans-serif;
  writing-mode: vertical-rl;
`;

const StatusBar = styled.footer`
  display: flex;
  align-items: center;
  justify-content: flex-end;
  flex: none;
  height: 30px;
  padding: 8px 18px 0 0;
  border-bottom: 2px solid #2b2f30;
`;

const Memory = styled.div`
  display: flex;
  align-items: center;
  width: 195px;
  height: 20px;
  padding: 0 2px;
  border: 1px solid #b5b5b5;
  border-bottom: none;

  span {
    flex: 1;
    padding-right: 12px;
    text-align: center;
  }
`;

const MemoryUsed = styled.div`
  width: 10px;
  height: 16px;
  background: #e6e08c;
`;
